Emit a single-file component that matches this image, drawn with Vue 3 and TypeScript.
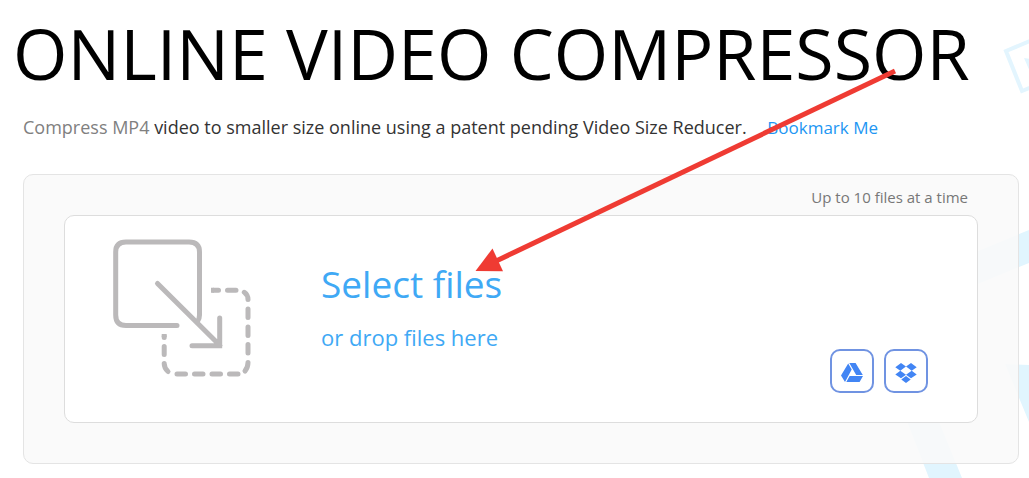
<script setup lang="ts">
import { ref } from 'vue'

const maxFiles = 10
const picker = ref<HTMLInputElement | null>(null)

function openPicker(): void {
  picker.value?.click()
}
</script>

<template>
  <main class="page">
    <svg class="backdrop" width="130" height="478" viewBox="0 0 130 478" aria-hidden="true">
      <path d="M155 31 L107 51 L123 91 L155 78" fill="none" stroke="#e3f5fe" stroke-width="4" />
      <path d="M125 58 L150 62 L138 88Z M131 64 L136 76 L142 66Z" fill="#e3f5fe" fill-rule="evenodd" />
      <path d="M79 251 L130 230 L130 263 L79 284Z M106 364 L130 365 L130 422Z M7 419 L39 419 L63 478 L30 478Z" fill="#e1f5fe" />
    </svg>

    <h1 class="title">ONLINE VIDEO COMPRESSOR</h1>
    <p class="intro">
      <span class="muted">Compress MP4</span> video to smaller size online using a patent pending Video Size Reducer.
      <a class="bookmark" href="#bookmark">Bookmark Me</a>
    </p>

    <section class="panel">
      <p class="limit">Up to {{ maxFiles }} files at a time</p>
      <div class="dropzone">
        <svg class="drag-icon" width="140" height="140" viewBox="112 238 140 140" fill="none" stroke="#bbb9ba" stroke-width="5" stroke-linecap="round" aria-hidden="true">
          <path d="M177 325.500H126Q115.700 325.500 115.700 315V252Q115.700 242 126 242H189Q199.500 242 199.500 252V315Q199.500 319 197.500 321.500" />
          <path d="M157.500 283.500L220 345.500M192 345.800H219.700V318" />
          <path d="M213.500 290.200H218.500M227.500 290.200H236M244.300 292.300Q248 295 248 299.500M248 309V317.500M248 327V335.500M248 344.500V353M248 362.500Q248 367.500 245 371M238 374H229.500M220.500 374H212M203 374H194.500M185.500 374H177M168 371.500Q164.200 368 164.200 363.500M164.200 354.500V346.500M164.200 337.500V336.500" />
          <path d="M211 290.200H214M164.200 334V337" stroke-linecap="butt" />
        </svg>
        <div class="prompt">
          <button class="select" type="button" @click="openPicker">Select files</button>
          <p class="drop">or drop files here</p>
          <input ref="picker" type="file" accept="video/*" multiple hidden aria-label="Video files" />
        </div>
        <div class="sources">
          <button class="source" type="button" aria-label="Google Drive">
            <svg width="22" height="20" viewBox="0 0 22 20" fill="#4285f4" aria-hidden="true">
              <path d="M7.200 0.500L10.700 6.500L4 19L0 12.500ZM8.300 0H14.600L21.800 12H15.200ZM8.600 13H22L18.600 19H5.300Z" />
            </svg>
          </button>
          <button class="source" type="button" aria-label="Dropbox">
            <svg width="22" height="20" viewBox="0 0 22 20" fill="#4285f4" aria-hidden="true">
              <path d="M6 0L11 3.600L5.300 7.800L0.300 4.200ZM16 0L21.700 4.200L16.700 7.800L11 3.600ZM5.300 7.800L11 11.800L6 15.300L0.300 11.500ZM16.700 7.800L21.700 11.500L16 15.300L11 11.800ZM11 13L15.700 16.500L11 20L6.300 16.500Z" />
            </svg>
          </button>
        </div>
      </div>
    </section>

    <svg class="pointer" width="1029" height="478" viewBox="0 0 1029 478" aria-hidden="true">
      <path d="M895 71L494 262" stroke="#ef3b33" stroke-width="5" />
      <path d="M475.500 271L492.500 248.500L503 271.300Z" fill="#ef3b33" />
    </svg>
  </main>
</template>

<style>
body {
  margin: 0;
  background: #fff;
}
</style>

<style scoped>
.page {
  position: relative;
  box-sizing: border-box;
  min-height: 100vh;
  padding: 0 10px 14px 23px;
  overflow: hidden;
  font-family: "Open Sans", "Noto Sans", sans-serif;
  color: #333;
}

.backdrop {
  position: absolute;
  top: 0;
  right: 0;
}

.title {
  position: relative;
  margin: 0 0 0 -10px;
  padding-top: 3px;
  font-size: 70px;
  font-weight: 400;
  line-height: 100px;
  color: #000;
  white-space: nowrap;
}

.intro {
  position: relative;
  margin: 12px 0 0;
  font-size: 18px;
  line-height: 24px;
}

.muted {
  color: #808080;
}

.bookmark {
  margin-left: 16px;
  font-size: 17px;
  color: #2196f3;
  text-decoration: none;
}

.panel {
  position: relative;
  margin-top: 34px;
  padding: 12px 40px 40px;
  border: 1px solid #e4e4e4;
  border-radius: 10px;
  background: rgba(250, 250, 250, 0.9);
}

.limit {
  margin: 0 10px 8px;
  font-size: 15px;
  line-height: 20px;
  text-align: right;
  color: #777;
}

.dropzone {
  display: flex;
  align-items: flex-start;
  padding: 22px 49px 29px 47px;
  border: 1px solid #ddd;
  border-radius: 10px;
  background: #fff;
}

.drag-icon {
  flex: none;
}

.prompt {
  margin-left: 69px;
  color: #3fa9f5;
}

.select {
  display: block;
  padding: 0;
  border: 0;
  background: none;
  color: inherit;
  font: 400 37px/52px "Open Sans", "Noto Sans", sans-serif;
  margin-top: 20px;
  cursor: pointer;
}

.drop {
  margin: 11px 0 0;
  font-size: 22px;
  line-height: 32px;
}

.sources {
  display: flex;
  gap: 10px;
  margin-top: 111px;
  margin-left: auto;
}

.source {
  display: grid;
  place-items: center;
  box-sizing: border-box;
  width: 44px;
  height: 44px;
  padding: 4px 0 0;
  border: 2px solid #7093e2;
  border-radius: 10px;
  background: #fff;
  cursor: pointer;
}

.pointer {
  position: absolute;
  top: 0;
  left: 0;
  pointer-events: none;
}
</style>
